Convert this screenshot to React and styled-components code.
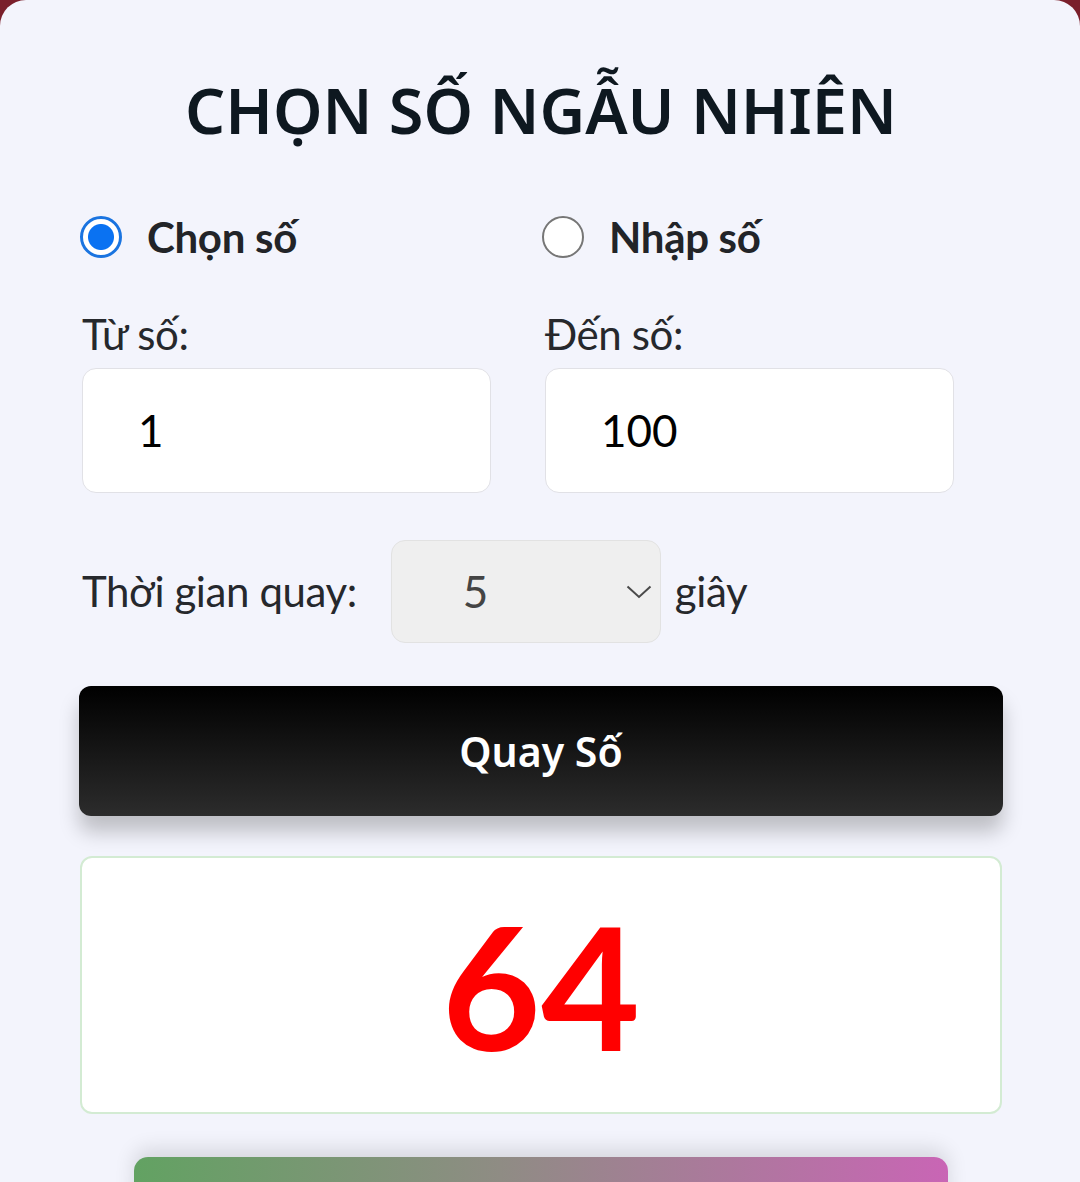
import React, { useState } from 'react';
import styled, { createGlobalStyle } from 'styled-components';

const GlobalStyle = createGlobalStyle`
  html, body {
    margin: 0;
    padding: 0;
  }
  body {
    background: #7a1f2b;
    font-family: Lato, "Noto Sans", sans-serif;
  }
`;

export default function App() {
  const [mode, setMode] = useState('choose');
  const [from, setFrom] = useState('1');
  const [to, setTo] = useState('100');
  const [seconds, setSeconds] = useState('5');

  return (
    <>
      <GlobalStyle />
      <Card>
        <Title>CHỌN SỐ NGẪU NHIÊN</Title>

        <TwoCols>
          <RadioOption>
            <RadioInput
              type="radio"
              name="mode"
              checked={mode === 'choose'}
              onChange={() => setMode('choose')}
            />
            <span>Chọn số</span>
          </RadioOption>
          <RadioOption>
            <RadioInput
              type="radio"
              name="mode"
              checked={mode === 'enter'}
              onChange={() => setMode('enter')}
            />
            <span>Nhập số</span>
          </RadioOption>
        </TwoCols>

        <FieldRow>
          <Field>
            <FieldLabel htmlFor="from">Từ số:</FieldLabel>
            <NumberInput id="from" value={from} onChange={e => setFrom(e.target.value)} />
          </Field>
          <Field $shift>
            <FieldLabel htmlFor="to">Đến số:</FieldLabel>
            <NumberInput id="to" value={to} onChange={e => setTo(e.target.value)} />
          </Field>
        </FieldRow>

        <TimeRow>
          <TimeLabel htmlFor="seconds">Thời gian quay:</TimeLabel>
          <SelectWrap>
            <Select id="seconds" value={seconds} onChange={e => setSeconds(e.target.value)}>
              {[1, 2, 3, 4, 5, 6, 7, 8, 9, 10].map(n => (
                <option key={n} value={n}>{n}</option>
              ))}
            </Select>
            <Chevron width="26" height="14" viewBox="0 0 26 14">
              <path d="M1.5 1.5 L13 12 L24.5 1.5" fill="none" stroke="#4a4a4a" strokeWidth="2" />
            </Chevron>
          </SelectWrap>
          <Unit>giây</Unit>
        </TimeRow>

        <SpinButton>Quay Số</SpinButton>

        <Result>64</Result>

        <GradientButton />
      </Card>
    </>
  );
}

const Card = styled.main`
  box-sizing: border-box;
  min-height: 1182px;
  padding: 72px 77px 40px 79px;
  background: #f3f4fc;
  border-radius: 26px 26px 0 0;
  overflow: hidden;
`;

const Title = styled.h1`
  margin: 0 0 63px;
  text-align: center;
  font-family: "Noto Sans", sans-serif;
  font-weight: 600;
  font-size: 63px;
  line-height: 1.2;
  color: #0e1820;
`;

const TwoCols = styled.div`
  display: grid;
  grid-template-columns: 1fr 1fr;
`;

const RadioOption = styled.label`
  display: flex;
  align-items: center;
  gap: 25px;
  padding-left: 1px;
  font-weight: 700;
  font-size: 42px;
  letter-spacing: -0.3px;
  line-height: 1.25;
  color: #222428;
  cursor: pointer;
`;

const RadioInput = styled.input`
  appearance: none;
  box-sizing: border-box;
  width: 42px;
  height: 42px;
  margin: 0;
  border-radius: 50%;
  border: 2.5px solid #767676;
  background: #fff;
  flex-shrink: 0;

  &:checked {
    border: 3px solid #1a74e0;
    background: radial-gradient(circle, #0a72f2 0 12.5px, #fff 13.5px);
  }
`;

const FieldRow = styled.div`
  display: grid;
  grid-template-columns: 1fr 1fr;
  margin-top: 45px;
`;

const Field = styled.div`
  display: flex;
  flex-direction: column;
  gap: 7px;
  padding-left: ${p => (p.$shift ? '4px' : '3px')};
`;

const FieldLabel = styled.label`
  font-size: 42px;
  letter-spacing: -0.4px;
  line-height: 1.25;
  color: #26282c;
`;

const NumberInput = styled.input`
  box-sizing: border-box;
  width: 409px;
  height: 125px;
  padding: 0 0 0 55px;
  border: 1.5px solid #e1e1e6;
  border-radius: 14px;
  background: #fff;
  font-family: Lato, sans-serif;
  font-size: 44px;
  color: #000;
  outline: none;
`;

const TimeRow = styled.div`
  display: flex;
  align-items: center;
  margin-top: 47px;
  padding-left: 3px;
`;

const TimeLabel = styled.label`
  font-size: 42px;
  letter-spacing: -0.4px;
  line-height: 1.25;
  color: #26282c;
  margin-right: 34px;
`;

const SelectWrap = styled.div`
  position: relative;
  width: 270px;
  height: 103px;
`;

const Select = styled.select`
  appearance: none;
  box-sizing: border-box;
  width: 100%;
  height: 100%;
  padding: 0 0 0 71px;
  border: 1.5px solid #e2e2e2;
  border-radius: 14px;
  background: #efefef;
  font-family: Lato, sans-serif;
  font-size: 44px;
  color: #444;
  outline: none;
`;

const Chevron = styled.svg`
  position: absolute;
  right: 9px;
  top: 45px;
  pointer-events: none;
`;

const Unit = styled.span`
  font-size: 42px;
  letter-spacing: -0.4px;
  line-height: 1.25;
  color: #26282c;
  margin-left: 14px;
`;

const SpinButton = styled.button`
  display: block;
  width: 100%;
  height: 130px;
  margin-top: 43px;
  border: none;
  border-radius: 12px;
  background: linear-gradient(180deg, #000 0%, #2c2c2c 100%);
  box-shadow: 0 16px 20px rgba(0, 0, 0, 0.22);
  font-family: "Noto Sans", sans-serif;
  font-weight: 600;
  font-size: 41px;
  color: #fff;
  cursor: pointer;
`;

const Result = styled.div`
  box-sizing: border-box;
  height: 258px;
  margin: 40px 1px 0;
  display: flex;
  align-items: center;
  justify-content: center;
  border: 2px solid #d3ebd3;
  border-radius: 12px;
  background: #fff;
  font-family: Lato, sans-serif;
  font-weight: 700;
  font-size: 171px;
  line-height: 1;
  color: #ff0000;
`;

const GradientButton = styled.button`
  display: block;
  width: 814px;
  height: 130px;
  margin: 43px auto 0;
  border: none;
  border-radius: 14px;
  background: linear-gradient(90deg, #62a262 0%, #8f8c84 45%, #c965b5 100%);
  box-shadow: 0 -8px 20px rgba(0, 0, 0, 0.12);
`;
